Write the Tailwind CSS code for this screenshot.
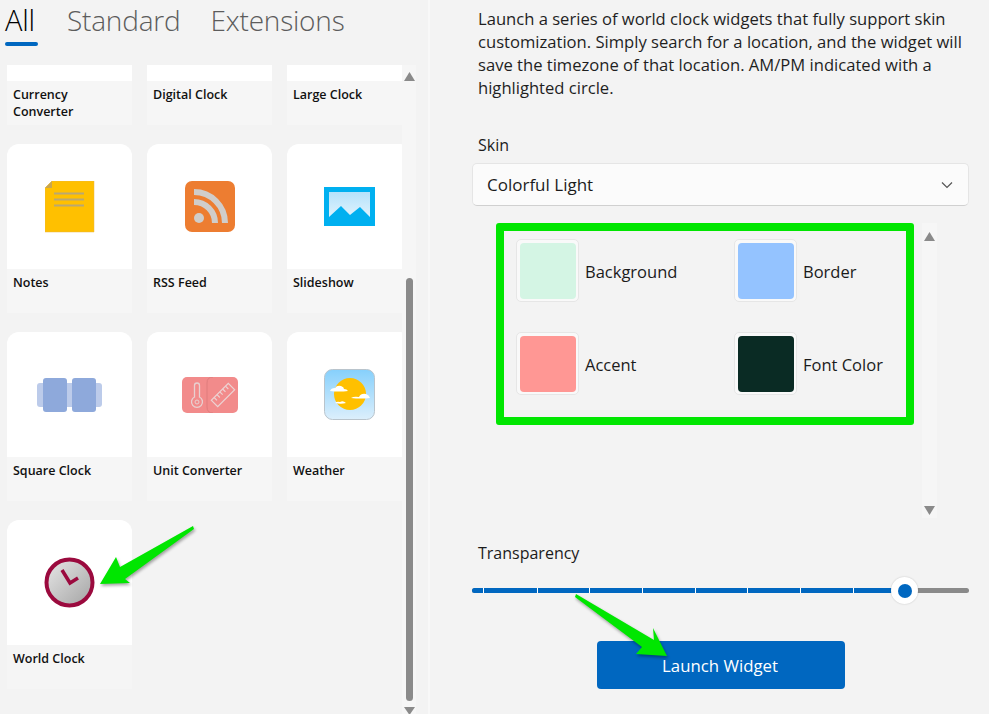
<!DOCTYPE html>
<html lang="en">
<head>
  <meta charset="UTF-8" />
  <title>Widgets</title>
  <meta name="viewport" content="width=device-width, initial-scale=1" />
  <script src="https://cdn.jsdelivr.net/npm/@tailwindcss/browser@4"></script>
</head>
<body class="bg-[#f3f3f3] text-[#1b1b1b] font-['Open_Sans',sans-serif] overflow-hidden">
  <div class="relative flex w-[989px] h-[714px] overflow-hidden">

    <!-- left: widget list -->
    <div class="w-[428px] shrink-0 flex flex-col">
      <div class="h-[65px] shrink-0 flex pl-[5px] text-[28px] tracking-[-0.2px] font-light leading-[40px]">
        <div class="w-[33px] flex flex-col">
          <span class="text-black text-[29px]">All</span>
          <div class="mt-[2px] h-[4px] rounded-full bg-[#0067c0]"></div>
        </div>
        <span class="ml-[29px] text-[#5c5c5c]">Standard</span>
        <span class="ml-[30px] text-[#5c5c5c]">Extensions</span>
      </div>

      <div class="flex-1 flex min-h-0">
        <div class="w-[402px] shrink-0 overflow-hidden pl-[7px] text-[#111]">
          <div class="-mt-[109px] grid grid-cols-[125px_125px_125px] gap-x-[15px] gap-y-[19px]">

            <div class="h-[169px] rounded-t-xl bg-[#f6f6f6]">
              <div class="h-[125px] bg-white rounded-t-xl"></div>
              <p class="px-[6px] pt-[5px] text-[12.5px] leading-[17px] font-semibold">Currency Converter</p>
            </div>
            <div class="h-[169px] rounded-t-xl bg-[#f6f6f6]">
              <div class="h-[125px] bg-white rounded-t-xl"></div>
              <p class="px-[6px] pt-[5px] text-[12.5px] leading-[17px] font-semibold">Digital Clock</p>
            </div>
            <div class="h-[169px] rounded-t-xl bg-[#f6f6f6]">
              <div class="h-[125px] bg-white rounded-t-xl"></div>
              <p class="px-[6px] pt-[5px] text-[12.5px] leading-[17px] font-semibold">Large Clock</p>
            </div>

            <div class="h-[169px] rounded-t-xl bg-[#f6f6f6]">
              <div class="h-[125px] bg-white rounded-t-xl flex items-center justify-center">
                <svg width="50" height="52" viewBox="0 0 50 52">
                  <path d="M7 0H49V51H0V7Z" fill="#ffc000" stroke="#e6b64a" stroke-width=".5"/>
                  <path d="M7 0V7H0Z" fill="#c9a64f"/>
                  <path d="M9 12.5H39M9 18.5H39M9 24.5H39" stroke="#b9a873" stroke-width="2"/>
                </svg>
              </div>
              <p class="px-[6px] pt-[5px] text-[12.5px] leading-[17px] font-semibold">Notes</p>
            </div>
            <div class="h-[169px] rounded-t-xl bg-[#f6f6f6]">
              <div class="h-[125px] bg-white rounded-t-xl flex items-center justify-center">
                <svg width="50" height="51" viewBox="0 0 50 51">
                  <rect width="50" height="51" rx="7" fill="#ed7d31"/>
                  <circle cx="14" cy="37" r="5" fill="#d0cdca"/>
                  <path d="M9 21A21 21 0 0 1 30 42" fill="none" stroke="#d0cdca" stroke-width="6"/>
                  <path d="M9 11A31 31 0 0 1 40 42" fill="none" stroke="#d0cdca" stroke-width="6"/>
                </svg>
              </div>
              <p class="px-[6px] pt-[5px] text-[12.5px] leading-[17px] font-semibold">RSS Feed</p>
            </div>
            <div class="h-[169px] rounded-t-xl bg-[#f6f6f6]">
              <div class="h-[125px] bg-white rounded-t-xl flex items-center justify-center">
                <svg width="51" height="39" viewBox="0 0 51 39">
                  <defs><linearGradient id="sky" x1="0" y1="0" x2="0" y2="1"><stop offset="0" stop-color="#b5e2fb"/><stop offset="1" stop-color="#e6f5fd"/></linearGradient></defs>
                  <rect width="51" height="39" fill="#00b0f0"/>
                  <rect x="5" y="5" width="41" height="29" fill="url(#sky)"/>
                  <path d="M5 30L17 19L26 28L36 20L46 30V34H5Z" fill="#00b0f0"/>
                </svg>
              </div>
              <p class="px-[6px] pt-[5px] text-[12.5px] leading-[17px] font-semibold">Slideshow</p>
            </div>

            <div class="h-[169px] rounded-t-xl bg-[#f6f6f6]">
              <div class="h-[125px] bg-white rounded-t-xl flex items-center justify-center">
                <svg width="65" height="34" viewBox="0 0 65 34">
                  <rect y="5" width="65" height="24" rx="3" fill="#bccbea"/>
                  <rect x="6" width="24" height="34" rx="3" fill="#8ea9db"/>
                  <rect x="35" width="24" height="34" rx="3" fill="#8ea9db"/>
                </svg>
              </div>
              <p class="px-[6px] pt-[5px] text-[12.5px] leading-[17px] font-semibold">Square Clock</p>
            </div>
            <div class="h-[169px] rounded-t-xl bg-[#f6f6f6]">
              <div class="h-[125px] bg-white rounded-t-xl flex items-center justify-center">
                <svg width="56" height="36" viewBox="0 0 56 36">
                  <rect width="56" height="36" rx="5" fill="#f28b8b"/>
                  <path d="M31 0Q25 0 25 6V30Q25 36 31 36" fill="none" stroke="#df7d7d" stroke-width="1"/>
                  <path d="M15 6a2.500 2.500 0 0 1 2.500 2.500V20a5.500 5.500 0 1 1-5 0V8.500A2.500 2.500 0 0 1 15 6Z" fill="none" stroke="#e8d0d0" stroke-width="1.300"/>
                  <circle cx="15" cy="25" r="2" fill="none" stroke="#e8d0d0"/>
                  <g transform="rotate(-45 41 18)" fill="none" stroke="#ecd2d2" stroke-width="1.200">
                    <rect x="29" y="13.500" width="24" height="9"/>
                    <path d="M33 13.500v4M37 13.500v4M41 13.500v4M45 13.500v4M49 13.500v4"/>
                  </g>
                </svg>
              </div>
              <p class="px-[6px] pt-[5px] text-[12.5px] leading-[17px] font-semibold">Unit Converter</p>
            </div>
            <div class="h-[169px] rounded-t-xl bg-[#f6f6f6]">
              <div class="h-[125px] bg-white rounded-t-xl flex items-center justify-center">
                <svg width="51" height="51" viewBox="0 0 51 51">
                  <defs><linearGradient id="wx" x1="0" y1="0" x2="0" y2="1"><stop offset="0" stop-color="#86d0fc"/><stop offset="1" stop-color="#dceffc"/></linearGradient></defs>
                  <rect x=".5" y=".5" width="50" height="50" rx="8" fill="url(#wx)" stroke="#b9c4cc"/>
                  <circle cx="26" cy="25" r="16" fill="#ffc000"/>
                  <path d="M6 22q1-3 5-3q2-3 6-2q3 1 3 3q3 0 4 2q-9 1-18 0Z" fill="#fff"/>
                  <path d="M27 29q3-2 8-1q2-4 7-3q3 1 4 4q-9 1-19 0Z" fill="#fff"/>
                  <path d="M11 34q2-2 5-1q3-2 6 1q-5 1.500-11 0Z" fill="#fff"/>
                </svg>
              </div>
              <p class="px-[6px] pt-[5px] text-[12.5px] leading-[17px] font-semibold">Weather</p>
            </div>

            <div class="h-[169px] rounded-t-xl bg-[#f5f5f5]">
              <div class="h-[125px] bg-white rounded-t-xl flex items-center justify-center">
                <svg width="51" height="51" viewBox="0 0 51 51">
                  <defs><linearGradient id="dial" x1="0" y1="0" x2="1" y2="1"><stop offset="0" stop-color="#e8e8e8"/><stop offset="1" stop-color="#a3a3a3"/></linearGradient></defs>
                  <circle cx="25.500" cy="25.500" r="23" fill="url(#dial)" stroke="#9b0a3e" stroke-width="4"/>
                  <path d="M18 13L26 26L34 21" fill="none" stroke="#9b0a3e" stroke-width="3.500"/>
                </svg>
              </div>
              <p class="px-[6px] pt-[5px] text-[12.5px] leading-[17px] font-semibold">World Clock</p>
            </div>
          </div>
        </div>

        <!-- list scrollbar -->
        <div class="w-[14px] shrink-0 bg-[#f6f6f6] flex flex-col items-center">
          <svg class="mt-[7px] shrink-0" width="11" height="9" viewBox="0 0 11 9"><path d="M5.500 0L11 9H0Z" fill="#8a8a8a"/></svg>
          <div class="mt-[197px] w-[7px] h-[423px] shrink-0 rounded-full bg-[#8a8a8a]"></div>
          <svg class="mt-[6px] shrink-0" width="11" height="8" viewBox="0 0 11 8"><path d="M0 0H11L5.500 8Z" fill="#8a8a8a"/></svg>
        </div>
      </div>
    </div>

    <div class="w-[2px] shrink-0 bg-[#f8f8f8]"></div>

    <!-- right: widget details -->
    <div class="flex-1 min-w-0 flex flex-col pl-[42px] pr-[20px]">
      <p class="ml-[6px] w-[490px] mt-[7px] text-[16.6px] leading-[23px] text-[#1f1f1f]">Launch a series of world clock widgets that fully support skin customization. Simply search for a location, and the widget will save the timezone of that location. AM/PM indicated with a highlighted circle.</p>

      <p class="ml-[6px] mt-[35px] text-[16px] leading-[23px]">Skin</p>
      <div class="mt-[6px] h-[43px] flex items-center justify-between px-[14px] bg-[#fbfbfb] border border-[#e5e5e5] border-b-[#d0d0d0] rounded-[5px] text-[17px]">
        <span>Colorful Light</span>
        <svg class="mr-[1px]" width="12" height="8" viewBox="0 0 12 8"><path d="M1 1.500L6 6.500L11 1.500" fill="none" stroke="#555" stroke-width="1.200"/></svg>
      </div>

      <div class="mt-[17px] flex h-[295px]">
        <div class="ml-[24px] w-[418px] h-[202px] border-[8px] border-[#00e600] rounded-[3px] pl-[12px] pt-[8px]">
          <div class="grid grid-cols-[218px_150px] auto-rows-[93px]">
            <div class="flex items-start gap-[6px]">
              <div class="w-[63px] h-[63px] p-[2.500px] bg-[#f9f9f9] border border-[#e6e6e6] rounded-[5px]"><div class="w-full h-full rounded-[4px] bg-[#d4f5e4]"></div></div>
              <span class="mt-[21px] text-[16.5px] leading-[24px]">Background</span>
            </div>
            <div class="flex items-start gap-[6px]">
              <div class="w-[63px] h-[63px] p-[2.500px] bg-[#f9f9f9] border border-[#e6e6e6] rounded-[5px]"><div class="w-full h-full rounded-[4px] bg-[#94c3ff]"></div></div>
              <span class="mt-[21px] text-[16.5px] leading-[24px]">Border</span>
            </div>
            <div class="flex items-start gap-[6px]">
              <div class="w-[63px] h-[63px] p-[2.500px] bg-[#f9f9f9] border border-[#e6e6e6] rounded-[5px]"><div class="w-full h-full rounded-[4px] bg-[#ff9794]"></div></div>
              <span class="mt-[21px] text-[16.5px] leading-[24px]">Accent</span>
            </div>
            <div class="flex items-start gap-[6px]">
              <div class="w-[63px] h-[63px] p-[2.500px] bg-[#f9f9f9] border border-[#e6e6e6] rounded-[5px]"><div class="w-full h-full rounded-[4px] bg-[#0a2b24]"></div></div>
              <span class="mt-[21px] text-[16.5px] leading-[24px]">Font Color</span>
            </div>
          </div>
        </div>
        <div class="ml-[8px] w-[15px] h-[295px] bg-[#f6f6f6] flex flex-col items-center justify-between pt-[9px] pb-[3px]">
          <svg width="11" height="9" viewBox="0 0 11 9"><path d="M5.500 0L11 9H0Z" fill="#8a8a8a"/></svg>
          <svg width="11" height="9" viewBox="0 0 11 9"><path d="M0 0H11L5.500 9Z" fill="#8a8a8a"/></svg>
        </div>
      </div>

      <p class="ml-[6px] mt-[24px] text-[16px] leading-[23px]">Transparency</p>

      <div class="relative mt-[23px] h-[5px] w-[497px] rounded-full bg-[#8a8a8a]">
        <div class="h-full w-[432px] rounded-full bg-[#0067c0] flex">
          <div class="ml-[11px] w-[1px] h-full bg-white"></div>
          <div class="ml-[52.500px] w-[1px] h-full bg-white"></div>
          <div class="ml-[51.500px] w-[1px] h-full bg-white"></div>
          <div class="ml-[52px] w-[1px] h-full bg-white"></div>
          <div class="ml-[52px] w-[1px] h-full bg-white"></div>
          <div class="ml-[51px] w-[1px] h-full bg-white"></div>
          <div class="ml-[52px] w-[1px] h-full bg-white"></div>
          <div class="ml-[52px] w-[1px] h-full bg-white"></div>
        </div>
        <div class="absolute left-[419px] -top-[11px] w-[27px] h-[27px] rounded-full bg-white shadow-[0_0_2px_rgba(0,0,0,.2)] flex items-center justify-center">
          <div class="w-[14px] h-[14px] rounded-full bg-[#0067c0]"></div>
        </div>
      </div>

      <div class="mt-[48px] ml-[125px] w-[248px] h-[48px] pt-[2px] pr-[2px] rounded-[4px] bg-[#0067c0] text-white text-[16.8px] flex items-center justify-center">Launch Widget</div>
    </div>

    <!-- green callout arrows -->
    <svg class="absolute inset-0 pointer-events-none drop-shadow-[1px_2px_1.500px_rgba(0,0,0,.35)]" width="989" height="714" viewBox="0 0 989 714">
      <path d="M193 526L120 567L116 557L100 584L130 583L125 579L194 529Z" fill="#00e600"/>
      <path d="M576 594L654 640L653 628L667 656L636 654L642 647L575 597Z" fill="#00e600"/>
    </svg>
  </div>
</body>
</html>
